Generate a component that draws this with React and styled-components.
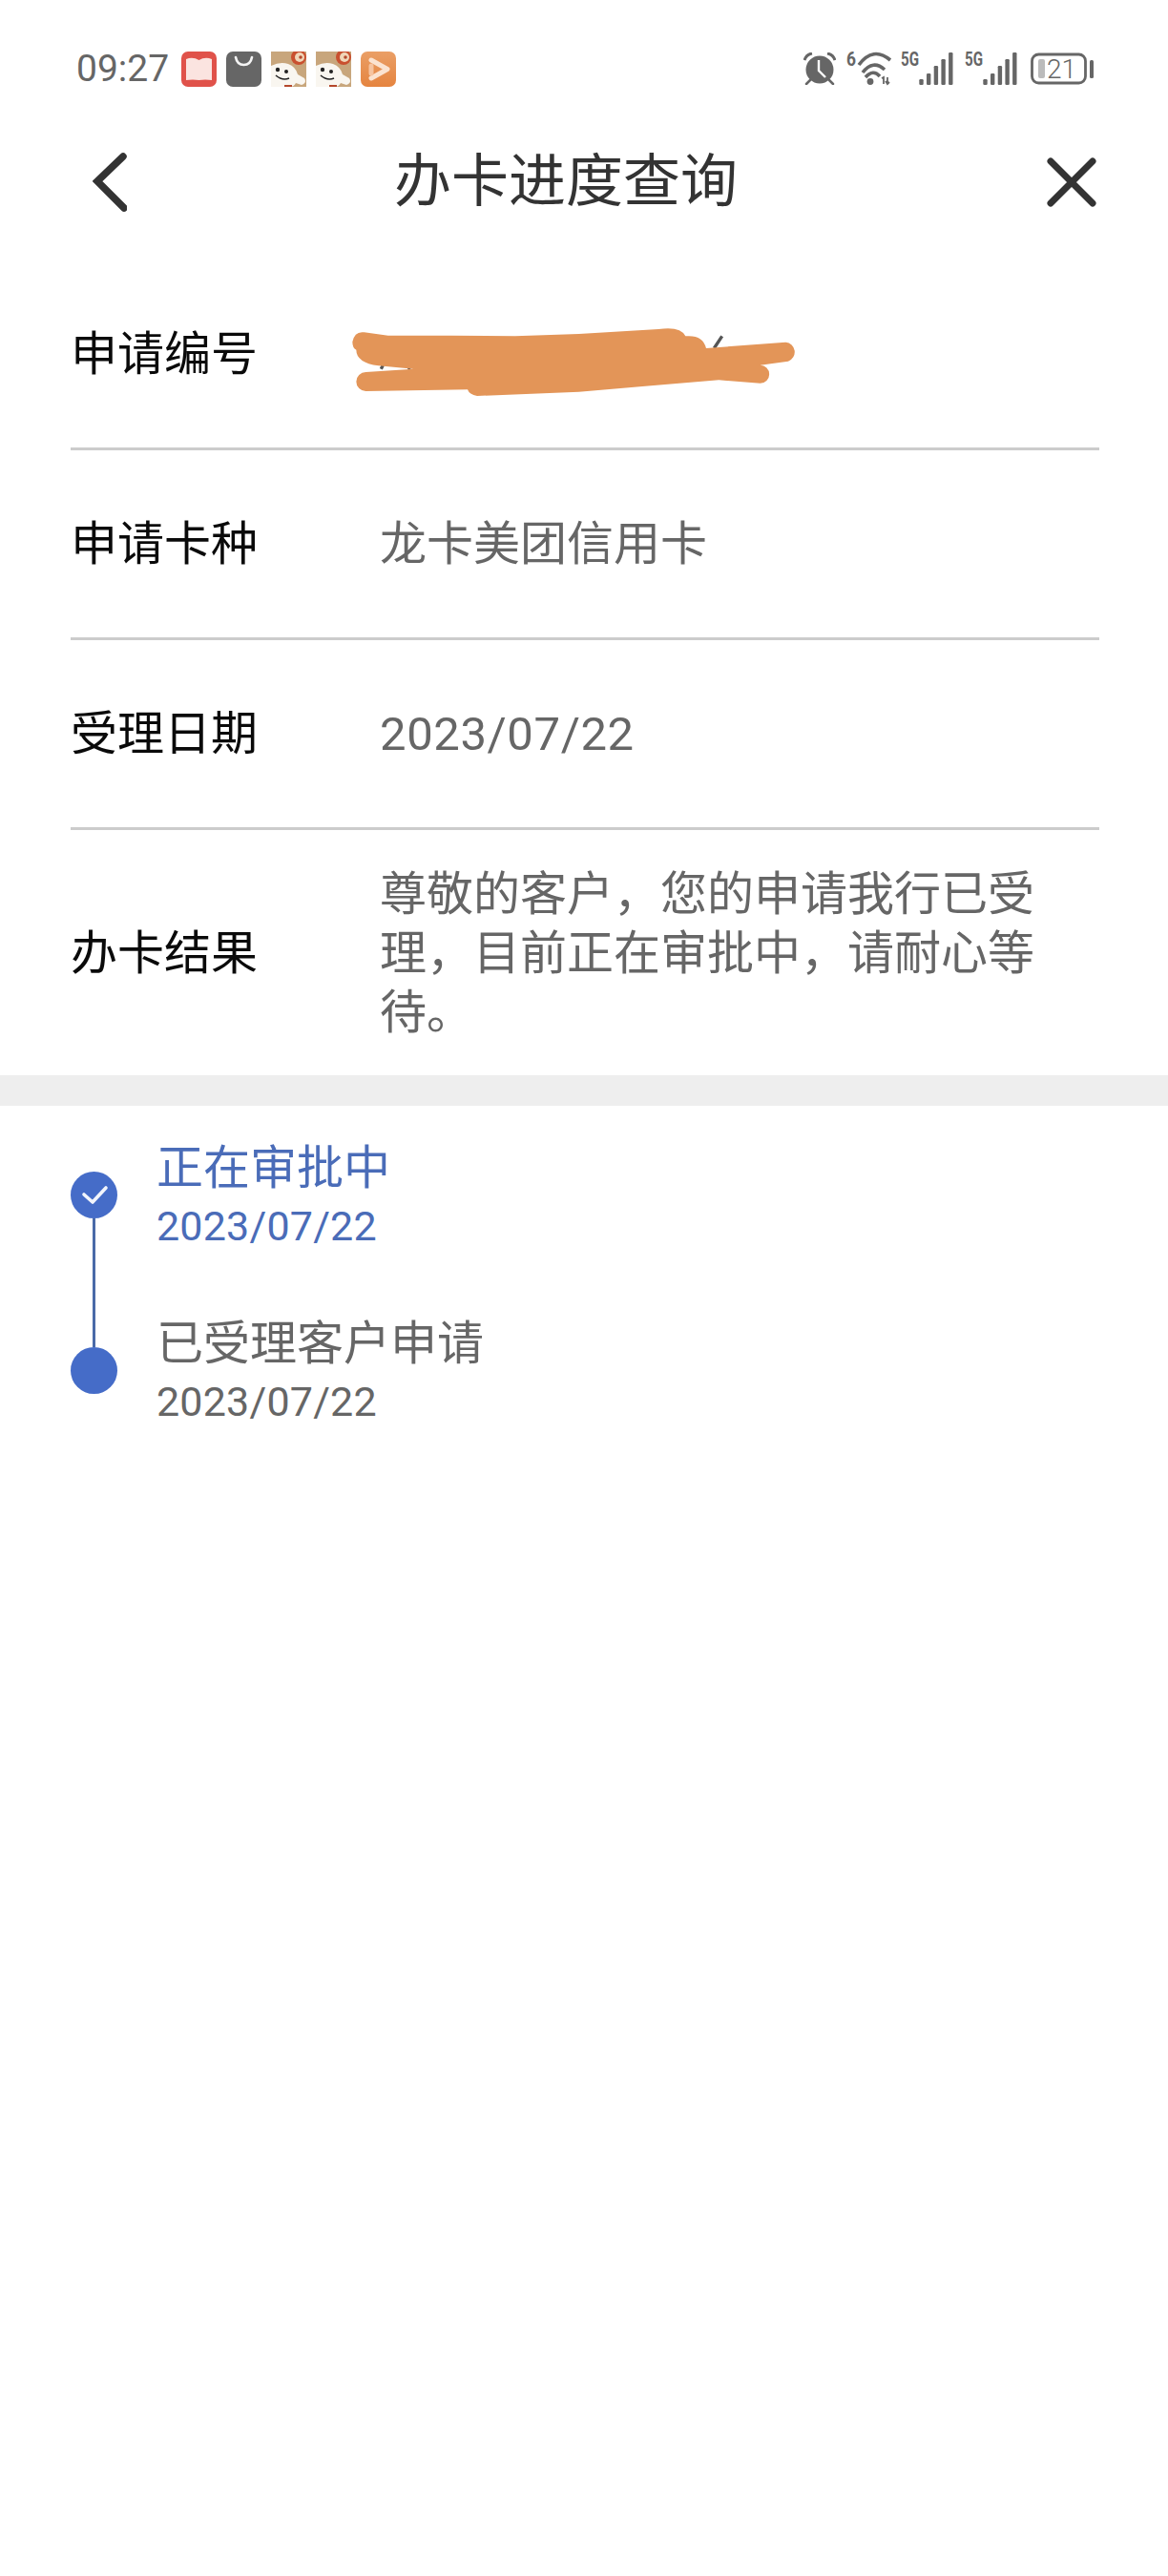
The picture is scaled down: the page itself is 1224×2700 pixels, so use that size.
import React from "react";
import styled, { createGlobalStyle } from "styled-components";

const GlobalStyle = createGlobalStyle`
  html, body {
    margin: 0;
    padding: 0;
    background: #fff;
  }
  body {
    font-family: Roboto, "Noto Sans CJK SC", sans-serif;
  }
`;

const Page = styled.div`
  width: 1224px;
  min-height: 2700px;
  background: #fff;
`;

const StatusBar = styled.div`
  display: flex;
  align-items: center;
  box-sizing: border-box;
  height: 100px;
  padding: 44px 78px 0 80px;
`;

const Time = styled.span`
  width: 97px;
  margin-right: 13px;
  font-size: 39px;
  line-height: 56px;
  color: #666;
`;

const AppIcons = styled.div`
  display: flex;
  gap: 10px;
`;

const StatusIcons = styled.div`
  display: flex;
  align-items: center;
  gap: 11px;
  margin-left: auto;
`;

const StatusSvg = styled.svg`
  overflow: visible;
`;

const Nav = styled.div`
  display: flex;
  align-items: center;
  box-sizing: border-box;
  height: 173px;
  padding: 9px 75px 0 97px;
`;

const Title = styled.h1`
  margin: 0 0 0 280px;
  font-size: 60px;
  line-height: 80px;
  font-weight: 400;
  color: #333;
`;

const CloseIcon = styled.svg`
  margin-left: auto;
`;

const List = styled.div`
  padding: 0 72px 0 74px;
`;

const Row = styled.div`
  display: flex;
  align-items: center;
  box-sizing: border-box;
  min-height: ${(p) => p.$height || 199}px;
  padding-top: 2px;
  border-bottom: ${(p) => (p.$last ? "none" : "3px solid #ccc")};
`;

const Label = styled.div`
  flex: 0 0 324px;
  font-size: 49px;
  line-height: 62px;
  color: #0a0a0a;
`;

const Value = styled.div`
  position: relative;
  width: 720px;
  min-height: 62px;
  font-size: 49px;
  line-height: 62px;
  letter-spacing: ${(p) => (p.$latin ? "0.6px" : "0")};
  color: #666;
`;

const Scribble = styled.svg`
  position: absolute;
  left: -58px;
  top: -21px;
`;

const Band = styled.div`
  height: 32px;
  background: #eee;
`;

const Timeline = styled.div`
  padding: 34px 0 0 74px;
`;

const Step = styled.div`
  position: relative;
  display: flex;
  gap: 41px;
  height: 184px;
  color: ${(p) => (p.$active ? "#4a6cb8" : "#666")};

  &:not(:last-child)::after {
    content: "";
    position: absolute;
    left: 23px;
    top: 84px;
    width: 3px;
    height: 135px;
    background: #4a6aa8;
  }
`;

const Dot = styled.div`
  display: flex;
  align-items: center;
  justify-content: center;
  flex: 0 0 49px;
  height: 49px;
  margin-top: 35px;
  border-radius: 50%;
  background: #456cc8;
`;

const StepTitle = styled.div`
  font-size: 49px;
  line-height: 64px;
`;

const StepDate = styled.div`
  font-size: 43px;
  line-height: 56px;
  letter-spacing: 0.2px;
`;

const BookIcon = () => (
  <svg width="37" height="37" viewBox="0 0 37 37">
    <rect width="37" height="37" rx="7" fill="#e0524a" />
    <path d="M5 8Q12 5 18.500 9Q25 5 32 8V30Q25 29 18.500 30Q12 29 5 30Z" fill="#fbe4e0" />
  </svg>
);

const BagIcon = () => (
  <svg width="37" height="37" viewBox="0 0 37 37">
    <rect width="37" height="37" rx="7" fill="#666" />
    <path d="M10 6q1.500 8 8.500 8t8.500-8" fill="none" stroke="#f4f4f4" strokeWidth="2.600" strokeLinecap="round" />
  </svg>
);

const DogIcon = () => (
  <svg width="37" height="37" viewBox="0 0 37 37">
    <rect width="37" height="37" fill="#c8a67c" />
    <circle cx="29" cy="6" r="8" fill="#c9502f" />
    <circle cx="30" cy="6" r="5" fill="#f0d6b8" />
    <circle cx="31" cy="6" r="1.800" fill="#b5482c" />
    <path d="M0 15Q10 10 18 13Q26 16 28 24L35 28Q38 33 32 35L26 33Q24 37 20 37H0Z" fill="#f9f6f0" />
    <circle cx="7" cy="19" r="2.200" fill="#222" />
    <circle cx="16" cy="21" r="2" fill="#222" />
    <path d="M5 25q7 6 14 3" fill="none" stroke="#222" strokeWidth="1.600" />
    <path d="M14 35h8v2h-8z" fill="#b5482c" />
  </svg>
);

const PlayIcon = () => (
  <svg width="37" height="37" viewBox="0 0 37 37">
    <defs>
      <linearGradient id="playFill" x1="0" y1="0" x2="0" y2="1">
        <stop offset="0" stopColor="#ea9f66" />
        <stop offset="1" stopColor="#e5843f" />
      </linearGradient>
    </defs>
    <rect width="37" height="37" rx="7" fill="url(#playFill)" />
    <path d="M11 9l17 9.500l-17 9.500" fill="none" stroke="#fbe3d0" strokeWidth="5" strokeLinecap="round" strokeLinejoin="round" />
    <path d="M11 15v8" stroke="#f6c4a0" strokeWidth="5" strokeLinecap="round" />
  </svg>
);

const AlarmIcon = () => (
  <svg width="34" height="34" viewBox="0 0 34 34">
    <circle cx="17" cy="18" r="14.500" fill="#666" />
    <path d="M1 8q2-6 8-7M33 8q-2-6-8-7" fill="none" stroke="#666" strokeWidth="3" />
    <path d="M7 29l-4 4M27 29l4 4" stroke="#666" strokeWidth="2.500" strokeLinecap="round" />
    <path d="M16 8v11l7 7" fill="none" stroke="#fff" strokeWidth="2.400" />
  </svg>
);

const WifiIcon = () => (
  <StatusSvg width="46" height="34" viewBox="0 0 46 34">
    <text x="0" y="14" fontFamily="Roboto" fontWeight="700" fontSize="20" fill="#666" textLength="10" lengthAdjust="spacingAndGlyphs">6</text>
    <path d="M13 13Q28 -7 46 8" fill="none" stroke="#666" strokeWidth="3.600" />
    <path d="M17 21Q28 7 40 18" fill="none" stroke="#666" strokeWidth="3.600" />
    <path d="M20 26Q28 17 35 25" fill="none" stroke="#666" strokeWidth="3.600" />
    <circle cx="25" cy="30.500" r="3.400" fill="#666" />
    <path d="M37 27l2-1v7M43 26v7M41 30l2 3 2-2" fill="none" stroke="#666" strokeWidth="1.800" />
  </StatusSvg>
);

const SignalIcon = () => (
  <StatusSvg width="56" height="34" viewBox="0 0 56 34">
    <text x="0" y="14" fontFamily="Roboto" fontWeight="700" fontSize="20" fill="#666" textLength="19" lengthAdjust="spacingAndGlyphs">5G</text>
    {[28, 22, 14, 7, 0].map((top, i) => (
      <rect key={top} x={19.300 + i * 7.700} y={top} width="4.400" height={34 - top} rx="1.200" fill="#666" />
    ))}
  </StatusSvg>
);

const BatteryIcon = () => (
  <StatusSvg width="68" height="34" viewBox="0 0 68 34">
    <rect x="3.500" y="2" width="56" height="30" rx="7" fill="none" stroke="#666" strokeWidth="2.800" />
    <rect x="10" y="7" width="7" height="20" rx="2" fill="#bbb" />
    <text x="19" y="27" fontFamily="Roboto" fontWeight="300" fontSize="28" fill="#666">21</text>
    <rect x="64" y="8" width="4" height="19" rx="1.500" fill="#666" />
  </StatusSvg>
);

const BackIcon = () => (
  <svg width="36" height="62" viewBox="0 0 36 62">
    <path d="M32 4L5 30l28 28" fill="none" stroke="#333" strokeWidth="7.500" strokeLinecap="round" strokeLinejoin="miter" />
  </svg>
);

const CheckIcon = () => (
  <svg width="30" height="24" viewBox="0 0 30 24">
    <path d="M4 11l9 8L27 4" fill="none" stroke="#f2f5fc" strokeWidth="3.600" strokeLinecap="round" strokeLinejoin="round" />
  </svg>
);

const rows = [
  { label: "申请卡种", value: "龙卡美团信用卡" },
  { label: "受理日期", value: "2023/07/22", latin: true },
];

const steps = [
  { title: "正在审批中", date: "2023/07/22", active: true },
  { title: "已受理客户申请", date: "2023/07/22" },
];

const resultText = "尊敬的客户\uFF0C您的申请我行已受理\uFF0C目前正在审批中\uFF0C请耐心等待\u3002";

const App = () => (
  <Page>
    <GlobalStyle />
    <StatusBar>
      <Time>09:27</Time>
      <AppIcons>
        <BookIcon />
        <BagIcon />
        <DogIcon />
        <DogIcon />
        <PlayIcon />
      </AppIcons>
      <StatusIcons>
        <AlarmIcon />
        <WifiIcon />
        <SignalIcon />
        <SignalIcon />
        <BatteryIcon />
      </StatusIcons>
    </StatusBar>
    <Nav>
      <BackIcon />
      <Title>办卡进度查询</Title>
      <CloseIcon width="52" height="52" viewBox="0 0 52 52">
        <path d="M4 4l44 44M48 4L4 48" fill="none" stroke="#333" strokeWidth="7" strokeLinecap="round" />
      </CloseIcon>
    </Nav>
    <List>
      <Row>
        <Label>申请编号</Label>
        <Value>
          <Scribble width="520" height="110" viewBox="0 0 1560 330">
            <path d="M1225 135l25-38M178 200l6-12M262 200l8-6" stroke="#555" strokeWidth="10" fill="none" />
            <path
              d="M88 115Q95 80 125 85L200 95L400 95L600 97L800 90L1050 75Q1120 65 1135 97Q1190 92 1200 135L1450 116A31 31 0 0 1 1458 176L1370 188A28 28 0 0 1 1370 245L1240 235L1000 255L800 272L480 285Q455 280 450 265L130 270A30 30 0 0 1 130 210L280 200L170 190Q100 180 100 140Q88 135 88 115Z"
              fill="#e39558"
            />
          </Scribble>
        </Value>
      </Row>
      {rows.map((row) => (
        <Row key={row.label}>
          <Label>{row.label}</Label>
          <Value $latin={row.latin}>{row.value}</Value>
        </Row>
      ))}
      <Row $last $height={257}>
        <Label>办卡结果</Label>
        <Value>{resultText}</Value>
      </Row>
    </List>
    <Band />
    <Timeline>
      {steps.map((step) => (
        <Step key={step.title} $active={step.active}>
          <Dot>{step.active && <CheckIcon />}</Dot>
          <div>
            <StepTitle>{step.title}</StepTitle>
            <StepDate>{step.date}</StepDate>
          </div>
        </Step>
      ))}
    </Timeline>
  </Page>
);

export default App;
